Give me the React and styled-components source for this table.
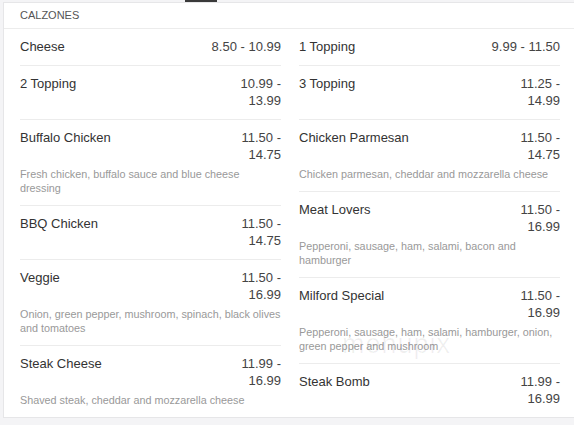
import styled, { createGlobalStyle } from "styled-components";

const GlobalStyle = createGlobalStyle`
	html, body {
		margin: 0;
		padding: 0;
		background: #f4f4f6;
		overflow: hidden;
	}
	body {
		font-family: "Liberation Sans", Arial, sans-serif;
	}
`;

const leftItems = [
	{ name: 'Cheese', price: '8.50 - 10.99' },
	{ name: '2 Topping', price: '10.99 - 13.99' },
	{ name: 'Buffalo Chicken', price: '11.50 - 14.75', desc: 'Fresh chicken, buffalo sauce and blue cheese dressing' },
	{ name: 'BBQ Chicken', price: '11.50 - 14.75' },
	{ name: 'Veggie', price: '11.50 - 16.99', desc: 'Onion, green pepper, mushroom, spinach, black olives and tomatoes' },
	{ name: 'Steak Cheese', price: '11.99 - 16.99', desc: 'Shaved steak, cheddar and mozzarella cheese' },
];

const rightItems = [
	{ name: '1 Topping', price: '9.99 - 11.50' },
	{ name: '3 Topping', price: '11.25 - 14.99' },
	{ name: 'Chicken Parmesan', price: '11.50 - 14.75', desc: 'Chicken parmesan, cheddar and mozzarella cheese' },
	{ name: 'Meat Lovers', price: '11.50 - 16.99', desc: 'Pepperoni, sausage, ham, salami, bacon and hamburger' },
	{ name: 'Milford Special', price: '11.50 - 16.99', desc: 'Pepperoni, sausage, ham, salami, hamburger, onion, green pepper and mushroom' },
	{ name: 'Steak Bomb', price: '11.99 - 16.99' },
];

const MenuColumn = ({ items }) => (
	<Column>
		{items.map(item => (
			<Item key={item.name}>
				<ItemTop>
					<ItemName>{item.name}</ItemName>
					<ItemPrice>{item.price}</ItemPrice>
				</ItemTop>
				{item.desc && <ItemDesc>{item.desc}</ItemDesc>}
			</Item>
		))}
	</Column>
);

const App = () => {
	return (
		<Page>
			<GlobalStyle />
			<TabStrip>
				<ActiveTab />
			</TabStrip>
			<Card>
				<SectionHeader>Calzones</SectionHeader>
				<Columns>
					<MenuColumn items={leftItems} />
					<MenuColumn items={rightItems} />
				</Columns>
				<Watermark aria-hidden="true">menupix</Watermark>
			</Card>
		</Page>
	);
};

const Page = styled.div`
	width: 574px;
	height: 425px;
	padding-left: 3px;
	box-sizing: border-box;
	background: #f4f4f6;
`;

const TabStrip = styled.div`
	height: 2px;
	display: flex;
	padding-left: 182px;
`;

const ActiveTab = styled.span`
	display: block;
	width: 32px;
	height: 2px;
	background: #3a3a3a;
`;

const Card = styled.div`
	position: relative;
	background: #fff;
	border: 1px solid #e6e6e8;
	border-right: none;
	box-sizing: border-box;
`;

const SectionHeader = styled.div`
	padding: 5px 16px 6px;
	font-size: 11px;
	line-height: 14px;
	text-transform: uppercase;
	color: #555;
	border-bottom: 1px solid #ececec;
`;

const Columns = styled.div`
	display: grid;
	grid-template-columns: 261px 261px;
	column-gap: 18px;
	padding: 0 15px 0 16px;
`;

const Column = styled.div`
	display: flex;
	flex-direction: column;
`;

const Item = styled.div`
	padding: 9px 0 10px;
	border-bottom: 1px solid #ececec;
	&:last-child {
		border-bottom: none;
	}
`;

const ItemTop = styled.div`
	display: flex;
	justify-content: space-between;
	align-items: flex-start;
	font-size: 13px;
	line-height: 17px;
`;

const ItemName = styled.span`
	color: #333;
`;

const ItemPrice = styled.span`
	max-width: 72px;
	text-align: right;
	color: #444;
`;

const ItemDesc = styled.p`
	margin: 4px 0 0;
	font-size: 10.8px;
	line-height: 14px;
	color: #999;
`;

const Watermark = styled.span`
	position: absolute;
	left: 338px;
	top: 326px;
	font-size: 27px;
	letter-spacing: 1px;
	color: rgba(0, 0, 0, 0.06);
	pointer-events: none;
	user-select: none;
`;

export default App;
